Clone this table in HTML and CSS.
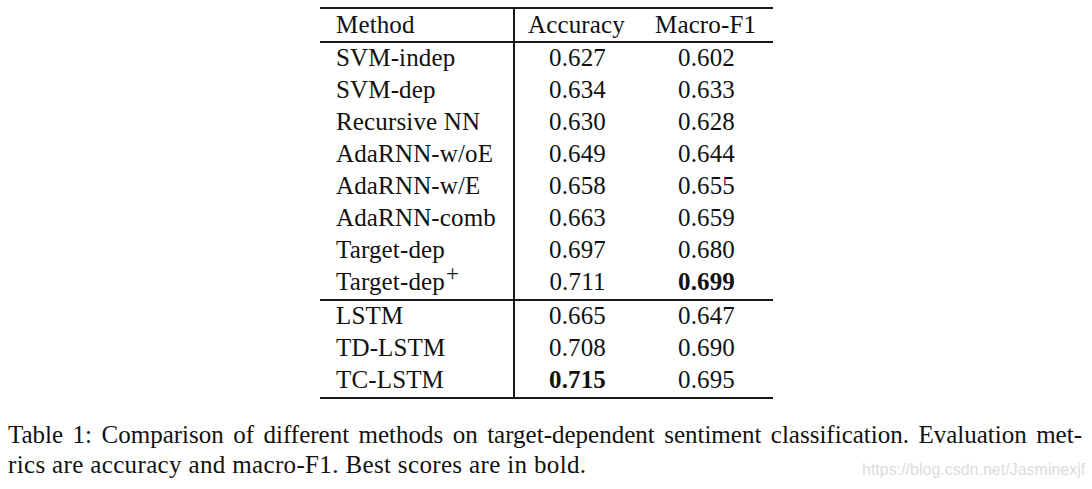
FILE: index.html
```html
<!DOCTYPE html>
<html>
<head>
<meta charset="utf-8">
<link rel="stylesheet" href="styles.css">
</head>
<body>
<div class="page">
  <div class="table">
    <div class="row head">
      <div class="c1">Method</div><div class="c2">Accuracy</div><div class="c3">Macro-F1</div>
    </div>
    <div class="group">
      <div class="row"><div class="c1">SVM-indep</div><div class="c2">0.627</div><div class="c3">0.602</div></div>
      <div class="row"><div class="c1">SVM-dep</div><div class="c2">0.634</div><div class="c3">0.633</div></div>
      <div class="row"><div class="c1">Recursive NN</div><div class="c2">0.630</div><div class="c3">0.628</div></div>
      <div class="row"><div class="c1">AdaRNN-w/oE</div><div class="c2">0.649</div><div class="c3">0.644</div></div>
      <div class="row"><div class="c1">AdaRNN-w/E</div><div class="c2">0.658</div><div class="c3">0.655</div></div>
      <div class="row"><div class="c1">AdaRNN-comb</div><div class="c2">0.663</div><div class="c3">0.659</div></div>
      <div class="row"><div class="c1">Target-dep</div><div class="c2">0.697</div><div class="c3">0.680</div></div>
      <div class="row"><div class="c1">Target-dep<span class="plus">+</span></div><div class="c2">0.711</div><div class="c3"><b>0.699</b></div></div>
    </div>
    <div class="group last">
      <div class="row"><div class="c1">LSTM</div><div class="c2">0.665</div><div class="c3">0.647</div></div>
      <div class="row"><div class="c1">TD-LSTM</div><div class="c2">0.708</div><div class="c3">0.690</div></div>
      <div class="row"><div class="c1">TC-LSTM</div><div class="c2"><b>0.715</b></div><div class="c3">0.695</div></div>
    </div>
  </div>
  <div class="caption">
    <div class="line1">Table 1: Comparison of different methods on target-dependent sentiment classification. Evaluation met-</div>
    <div class="line2">rics are accuracy and macro-F1. Best scores are in bold.</div>
  </div>
  <div class="watermark">https://blog.csdn.net/Jasminexjf</div>
</div>
</body>
</html>
```
FILE: styles.css
```css
html, body {
  margin: 0;
  padding: 0;
  background: #ffffff;
}
.page {
  position: relative;
  width: 1092px;
  height: 489px;
  font-family: "Liberation Serif", "Times New Roman", serif;
  color: #111111;
  padding-top: 7px;
  box-sizing: border-box;
}
.table {
  margin-left: 320px;
  width: 453px;
  border-top: 2px solid #1a1a1a;
  font-size: 25px;
  letter-spacing: 0.15px;
}
.row {
  display: grid;
  grid-template-columns: 195px 125px 133px;
  height: 32px;
  line-height: 26px;
}
.row > div {
  padding-top: 2px;
  padding-bottom: 4px;
  white-space: nowrap;
}
.head {
  height: 32px;
  border-bottom: 2px solid #1a1a1a;
}
.head > div {
  padding-top: 3px;
  padding-bottom: 3px;
}
.c1 {
  padding-left: 16px;
  border-right: 2px solid #1a1a1a;
}
.c2, .c3 {
  text-align: center;
}
.head .c2 {
  text-align: left;
  padding-left: 13px;
}
.head .c3 {
  text-align: left;
  padding-left: 15px;
}
.group {
  border-bottom: 2px solid #1a1a1a;
}
.plus {
  display: inline-block;
  font-size: 23px;
  line-height: 1;
  transform: translateY(-9px);
  margin-left: 1px;
}
b {
  font-weight: bold;
}
.caption {
  margin: 21px 10px 0 8px;
  font-size: 25px;
  line-height: 30px;
  letter-spacing: 0.35px;
}
.line1 {
  text-align: justify;
  text-align-last: justify;
  letter-spacing: 0;
}
.watermark {
  position: absolute;
  left: 862px;
  top: 461px;
  font-family: "Liberation Sans", Arial, sans-serif;
  font-size: 16px;
  color: #dcdcdc;
  white-space: nowrap;
}
```
